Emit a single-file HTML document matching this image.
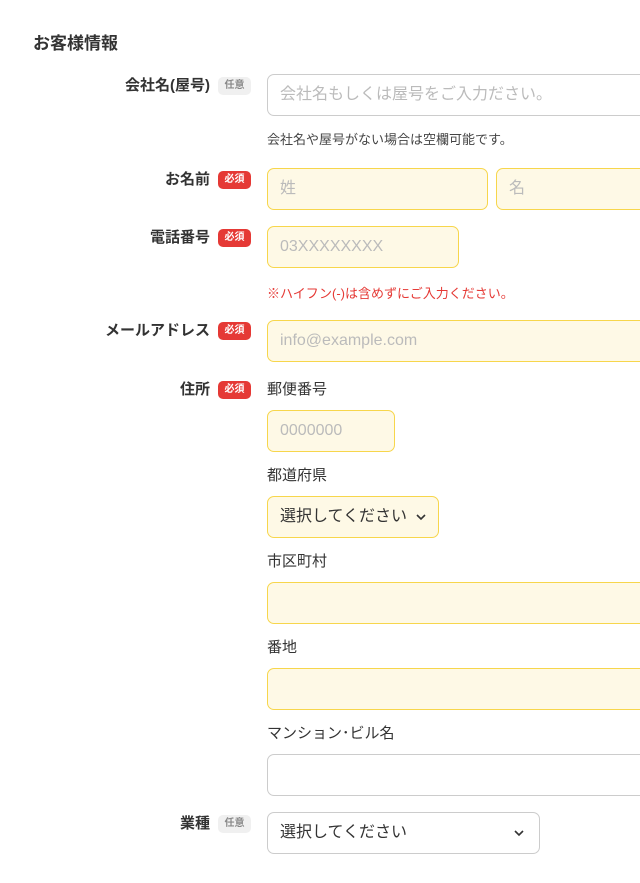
<!DOCTYPE html>
<html><head><meta charset="utf-8"><style>
*{box-sizing:border-box;margin:0;padding:0}
body{width:640px;height:883px;overflow:hidden;background:#fff;position:relative;font-family:"Liberation Sans","Noto Sans CJK JP",sans-serif;color:#333}
.a{position:absolute;white-space:nowrap}
.t{left:33px;top:33px;font-size:17px;font-weight:bold;line-height:22px}
.l{right:430px;font-size:15px;font-weight:bold;line-height:20px}
.b{left:218px;width:33px;height:18px;border-radius:5px;font-size:10px;font-weight:bold;line-height:18px;text-align:center}
.req{background:#e53935;color:#fff}
.opt{background:#f0f0f0;color:#888}
.i{left:267px;height:42px;border:1px solid #f7d64c;background:#fef9e6;border-radius:7px;font-size:16px;color:#bbb;line-height:40px;padding-left:12px}
.w{border-color:#ccc;background:#fff}
.s{font-size:15px;line-height:20px;left:267px}
.h{font-size:13px;line-height:18px;left:267px}
.sel{color:#333}
.sel svg{position:absolute;top:16px}
</style></head><body>
<div class="a t">お客様情報</div>

<div class="a l" style="top:76px">会社名(屋号)</div><div class="a b opt" style="top:77px">任意</div>
<div class="a i w" style="top:74px;width:400px">会社名もしくは屋号をご入力ださい。</div>
<div class="a h" style="top:131px;color:#444">会社名や屋号がない場合は空欄可能です。</div>

<div class="a l" style="top:170px">お名前</div><div class="a b req" style="top:171px">必須</div>
<div class="a i" style="top:168px;width:221px">姓</div>
<div class="a i" style="top:168px;left:496px;width:200px">名</div>

<div class="a l" style="top:228px">電話番号</div><div class="a b req" style="top:229px">必須</div>
<div class="a i" style="top:226px;width:192px">03XXXXXXXX</div>
<div class="a h" style="top:285px;color:#e53935">※ハイフン(-)は含めずにご入力ください。</div>

<div class="a l" style="top:321px">メールアドレス</div><div class="a b req" style="top:322px">必須</div>
<div class="a i" style="top:320px;width:400px">info@example.com</div>

<div class="a l" style="top:380px">住所</div><div class="a b req" style="top:381px">必須</div>
<div class="a s" style="top:380px">郵便番号</div>
<div class="a i" style="top:410px;width:128px">0000000</div>
<div class="a s" style="top:466px">都道府県</div>
<div class="a i sel" style="top:496px;width:172px">選択してください<svg width="12" height="8" style="left:147px" viewBox="0 0 12 8"><path d="M2 2l4 4 4-4" fill="none" stroke="#333" stroke-width="1.6"/></svg></div>
<div class="a s" style="top:552px">市区町村</div>
<div class="a i" style="top:582px;width:400px"></div>
<div class="a s" style="top:638px">番地</div>
<div class="a i" style="top:668px;width:400px"></div>
<div class="a s" style="top:724px">マンション･ビル名</div>
<div class="a i w" style="top:754px;width:400px"></div>

<div class="a l" style="top:814px">業種</div><div class="a b opt" style="top:815px">任意</div>
<div class="a i w sel" style="top:812px;width:273px">選択してください<svg width="12" height="8" style="left:245px" viewBox="0 0 12 8"><path d="M2 2l4 4 4-4" fill="none" stroke="#333" stroke-width="1.6"/></svg></div>
</body></html>
